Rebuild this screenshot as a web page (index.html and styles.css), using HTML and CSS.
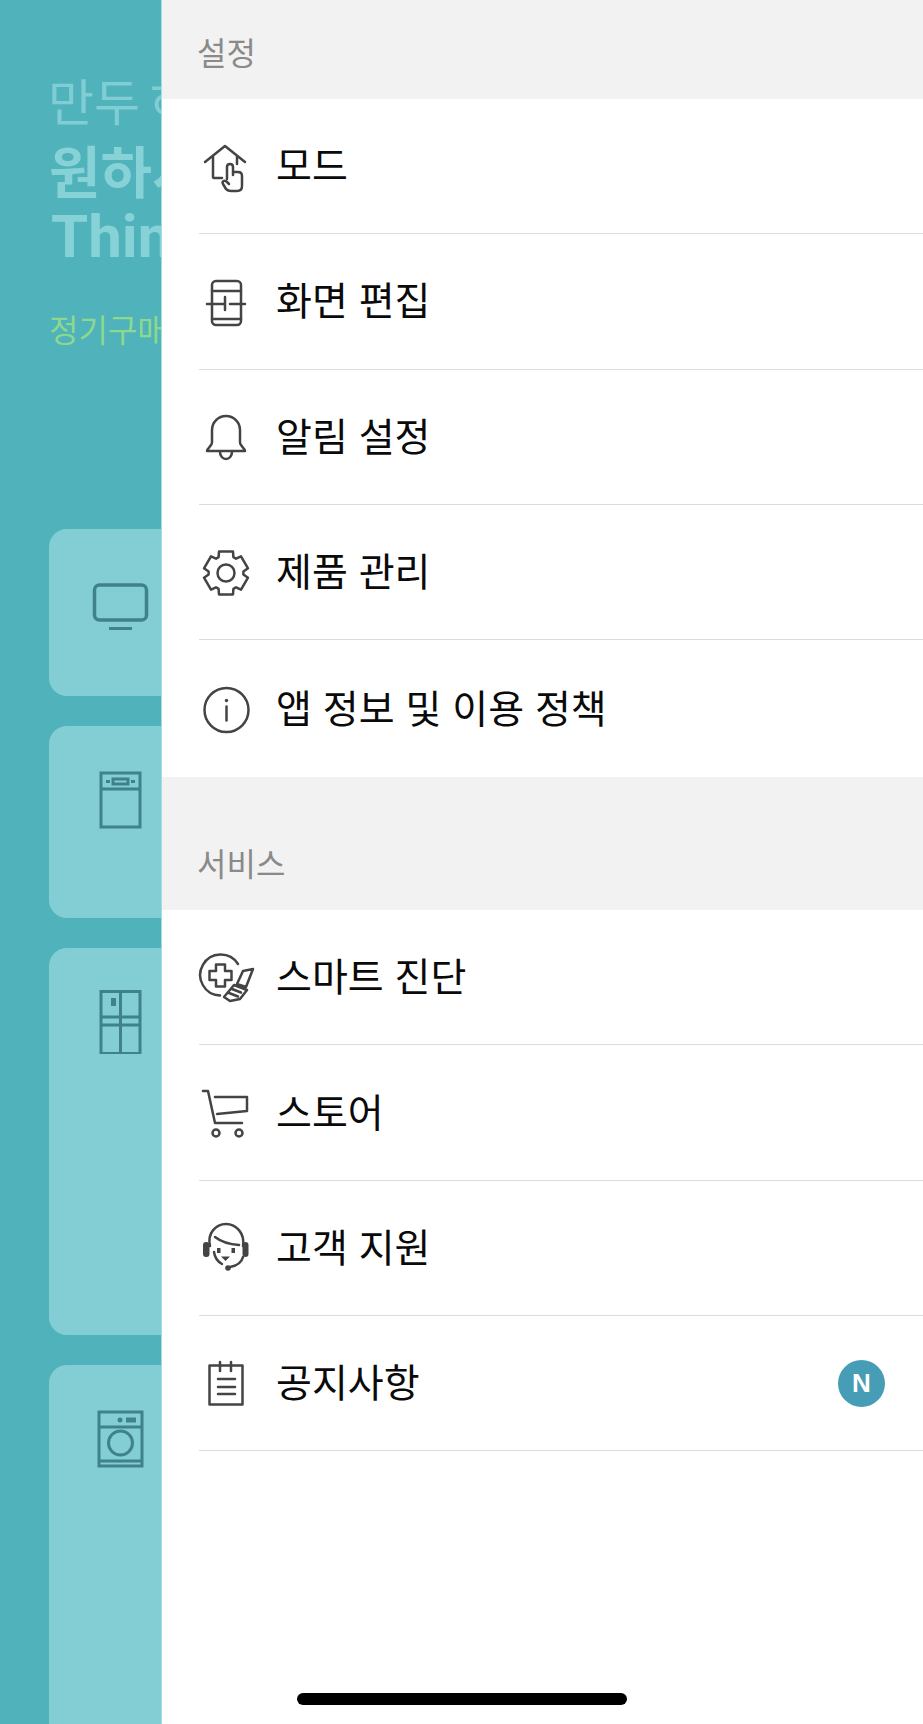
FILE: index.html
```html
<!DOCTYPE html>
<html lang="ko">
<head>
  <meta charset="utf-8">
  <title>설정</title>
  <link rel="stylesheet" href="styles.css">
</head>
<body>
  <div class="app">
    <!-- home screen behind the drawer -->
    <div class="home">
      <div class="hero-name">만두 하</div>
      <div class="hero-title">원하시</div>
      <div class="hero-title hero-latin">Thin</div>
      <div class="hero-link">정기구매</div>

      <div class="card card-tv">
        <svg class="card-icon" viewBox="0 0 64 64">
          <rect x="6.5" y="14" width="52" height="35" rx="5"/>
          <path d="M21 57.5h23"/>
        </svg>
      </div>
      <div class="card card-dish">
        <svg class="card-icon" viewBox="0 0 64 64">
          <rect x="13" y="5" width="39" height="54"/>
          <path d="M13 21h39"/>
          <rect x="25" y="11" width="15" height="5"/>
          <path d="M18 13.5h4M43 13.5h4"/>
        </svg>
      </div>
      <div class="card card-fridge">
        <svg class="card-icon" viewBox="0 0 64 64">
          <rect x="13" y="1.5" width="39" height="62"/>
          <path d="M32.5 1.5v62M13 27h39M13 35h39"/>
          <rect class="solid" x="23" y="8" width="5" height="8"/>
        </svg>
      </div>
      <div class="card card-wash">
        <svg class="card-icon" viewBox="0 0 64 64">
          <rect x="11" y="5" width="43" height="54"/>
          <path d="M11 20h43M11 54h43"/>
          <circle cx="32.5" cy="36" r="12"/>
          <circle class="solid" cx="32" cy="13" r="2.5"/>
          <rect class="solid" x="38" y="10.5" width="10" height="5"/>
        </svg>
      </div>
    </div>

    <!-- side drawer -->
    <nav class="drawer">
      <div class="section-title section-first">설정</div>

      <a class="row">
        <svg class="row-icon" viewBox="0 -2 54 54">
          <path d="M6 21 26 5l20 16M14 15v21q0 1 1 1h8M38 15v8"/>
          <path d="M28 38V26q0-3 3-3t3 3v8M34 31h5q4 0 4 4v10q0 5-5 5h-6q-3 0-5-2l-3-5q-1-2 .5-3t3.5 1l2 2"/>
        </svg>
        <span class="row-label">모드</span>
      </a>
      <a class="row">
        <svg class="row-icon" viewBox="0 -2 54 54">
          <rect x="13" y="5" width="29" height="44" rx="4"/>
          <path d="M13 15h29M13 43h29M8 28h18M31 28h15M26 21v13"/>
        </svg>
        <span class="row-label">화면 편집</span>
      </a>
      <a class="row">
        <svg class="row-icon" viewBox="0 -1 54 54">
          <path d="M8 40q0-1 1-2l3-4q1-1 1-3V19a14 14 0 0 1 28 0v12q0 2 1 3l3 4q1 1 1 2z"/>
          <path d="M21 41a6 7 0 0 0 12 0"/>
        </svg>
        <span class="row-label">알림 설정</span>
      </a>
      <a class="row">
        <svg class="row-icon" viewBox="0 0 54 54">
          <g transform="translate(27 28)">
            <path d="M-7.4-15.9-7-21.4H7L7.4-15.9 10-14.3 15-16.7 22-4.7 17.4-1.5V1.5L22 4.7 15 16.7 10 14.3 7.4 15.9 7 21.4H-7L-7.4 15.9-10 14.3-15 16.7-22 4.7-17.4 1.5V-1.5L-22-4.7-15-16.7-10-14.3z"/>
            <circle r="8.5"/>
          </g>
        </svg>
        <span class="row-label">제품 관리</span>
      </a>
      <a class="row row-last">
        <svg class="row-icon" viewBox="0 0 54 54">
          <circle cx="27.5" cy="28" r="22"/>
          <path d="M27.5 24.5v14"/>
          <circle class="solid" cx="27.5" cy="18.5" r="1.7"/>
        </svg>
        <span class="row-label">앱 정보 및 이용 정책</span>
      </a>

      <div class="section-title">서비스</div>

      <a class="row">
        <svg class="row-icon" viewBox="0 0 54 54">
          <path d="M39 14A20.5 20.5 0 1 0 21 45.5"/>
          <path d="M17 14.5h9V21h6.5v9H26v6.5h-9V30h-6.5v-9H17z"/>
          <path d="M44 21l10-2-7 18-9-3zM35 35l13 5-7 9-10 2-6-4zM33 39l9 3.5M30 43l9 3.5"/>
        </svg>
        <span class="row-label">스마트 진단</span>
      </a>
      <a class="row">
        <svg class="row-icon" viewBox="0 0 54 54">
          <path d="M4 5h5l7 32h27M16 11h32v14l-30 3"/>
          <circle cx="17" cy="47" r="3.5"/>
          <circle cx="40" cy="47" r="3.5"/>
        </svg>
        <span class="row-label">스토어</span>
      </a>
      <a class="row">
        <svg class="row-icon" viewBox="0 0 54 54">
          <path d="M11 25C8 12 17 3 27 3s19 9 17 22"/>
          <rect class="solid" x="4" y="21" width="6.5" height="15" rx="3"/>
          <rect class="solid" x="43.5" y="21" width="6" height="15" rx="3"/>
          <path d="M16 16q9 7 24 8M15 31q1 8 8 12M44 36q-2 8-13 10"/>
          <rect class="solid" x="18" y="27" width="3.5" height="5"/>
          <rect class="solid" x="32.5" y="27" width="3.5" height="5"/>
          <path class="solid" d="M22 35.5h9l-4.5 4.5z"/>
          <circle class="solid" cx="29" cy="47" r="2.8"/>
        </svg>
        <span class="row-label">고객 지원</span>
      </a>
      <a class="row">
        <svg class="row-icon" viewBox="0 0 54 54">
          <rect x="10.5" y="9.5" width="33" height="39"/>
          <path d="M21 6v9M32 6v9M19 23h17M19 31h17M19 38h17"/>
        </svg>
        <span class="row-label">공지사항</span>
        <span class="badge">N</span>
      </a>
    </nav>

    <div class="home-indicator"></div>
  </div>
</body>
</html>
```

FILE: styles.css
```css
html, body {
  margin: 0;
  padding: 0;
}

body {
  font-family: "Noto Sans CJK KR", "Noto Sans", sans-serif;
}

.app {
  position: relative;
  width: 923px;
  height: 1724px;
  overflow: hidden;
  background-color: #50b2ba;
}

/* home screen, dimmed behind the drawer */
.home {
  padding: 69px 0 0 49px;
  white-space: nowrap;
}

.hero-name {
  height: 66px;
  margin-left: -1px;
  font-size: 50px;
  line-height: 60px;
  font-weight: 400;
  word-spacing: -4px;
  color: #80cdd3;
}

.hero-title {
  height: 66px;
  font-size: 56px;
  line-height: 68px;
  font-weight: 700;
  color: #87d2d7;
}

.hero-latin {
  margin-left: 2px;
  padding-top: 2px;
  font-family: Roboto, "Noto Sans", sans-serif;
  font-size: 60px;
}

.hero-link {
  margin-top: 37px;
  margin-bottom: 179px;
  height: 44px;
  font-size: 32px;
  line-height: 44px;
  color: #8bd98f;
}

.card {
  box-sizing: border-box;
  width: 600px;
  margin-bottom: 30px;
  padding: 42px 0 0 39px;
  background-color: #82ced4;
  border-radius: 18px;
}

.card-tv { height: 167px; }
.card-dish { height: 192px; }
.card-fridge { height: 387px; }
.card-wash { height: 500px; }

.card-icon {
  display: block;
  width: 64px;
  height: 64px;
  fill: none;
  stroke: #3f8289;
  stroke-width: 3;
}

.card-icon .solid {
  fill: #3f8289;
  stroke: none;
}

.card-tv .card-icon rect {
  stroke-width: 3.5;
}

/* drawer */
.drawer {
  position: absolute;
  top: 0;
  left: 162px;
  right: 0;
  bottom: 0;
  background-color: #fff;
  box-shadow: -1px 0 0 #a4dde1;
}

.section-title {
  box-sizing: border-box;
  height: 133px;
  padding: 63px 0 0 35px;
  font-size: 32px;
  line-height: 44px;
  color: #8a8a8a;
  background-color: #f2f2f2;
}

.section-first {
  height: 99px;
  padding-top: 29px;
}

.row {
  box-sizing: border-box;
  display: flex;
  align-items: center;
  gap: 23px;
  height: 135.3px;
  margin-left: 37px;
  padding-right: 38px;
  border-bottom: 1.5px solid #dcdcdc;
  color: #0a0a0a;
}

.row-last {
  height: 137px;
  border-bottom: none;
}

.row-icon {
  flex: none;
  width: 54px;
  height: 54px;
  overflow: visible;
  fill: none;
  stroke: #444;
  stroke-width: 2.5;
  stroke-linejoin: round;
  stroke-linecap: round;
}

.row-icon .solid {
  fill: #444;
  stroke: none;
}

.row-label {
  flex: 1;
  margin-bottom: 6px;
  font-size: 39px;
  line-height: 50px;
  white-space: nowrap;
}

.badge {
  flex: none;
  width: 47px;
  height: 47px;
  border-radius: 50%;
  background-color: #479db5;
  color: #fff;
  font-family: "Liberation Sans", sans-serif;
  font-size: 26px;
  font-weight: 700;
  line-height: 47px;
  text-align: center;
}

.home-indicator {
  position: absolute;
  left: 297px;
  top: 1693px;
  width: 330px;
  height: 12px;
  border-radius: 6px;
  background-color: #000;
}
```
